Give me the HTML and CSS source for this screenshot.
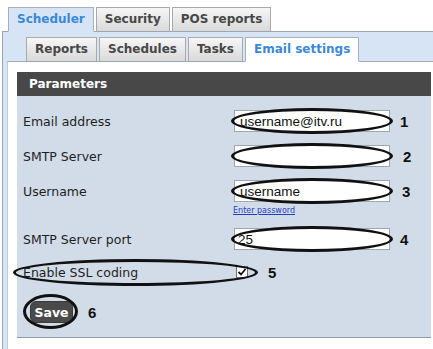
FILE: index.html
```html
<!DOCTYPE html>
<html lang="en">
<head>
  <meta charset="UTF-8">
  <title>Email settings</title>
  <link rel="stylesheet" href="styles.css">
</head>
<body>
<div class="top-tabs">
  <span class="tab tab-active">Scheduler</span>
  <span class="tab">Security</span>
  <span class="tab">POS reports</span>
</div>

<div class="frame">
  <div class="sub-tabs">
    <span class="tab">Reports</span>
    <span class="tab">Schedules</span>
    <span class="tab">Tasks</span>
    <span class="tab tab-current">Email settings</span>
  </div>

  <div class="content">
    <div class="panel">
      <div class="panel-head">Parameters</div>

      <div class="panel-body">
        <div class="field field-first">
          <label class="field-label">Email address</label>
          <span class="marked"><input class="text-input" type="text" value="username@itv.ru"></span>
          <span class="num">1</span>
        </div>

        <div class="field">
          <label class="field-label">SMTP Server</label>
          <span class="marked"><input class="text-input" type="text" value=""></span>
          <span class="num num-wide">2</span>
        </div>

        <div class="field">
          <label class="field-label">Username</label>
          <span class="marked"><input class="text-input" type="text" value="username"></span>
          <span class="num num-mid">3</span>
        </div>
        <div class="link-row"><a href="#" class="small-link">Enter password</a></div>

        <div class="field field-port">
          <label class="field-label">SMTP Server port</label>
          <span class="marked"><input class="text-input text-tight" type="text" value="25"></span>
          <span class="num">4</span>
        </div>

        <div class="field field-check">
          <span class="ssl-wrap">
            <label class="field-label">Enable SSL coding</label>
            <span class="check">
              <svg width="10" height="10" viewBox="0 0 10 10"><path d="M1.5 5 L4 7.5 L8.5 2" fill="none" stroke="#111" stroke-width="1.8"/></svg>
            </span>
          </span>
          <span class="num num-ssl">5</span>
        </div>

        <div class="actions">
          <span class="save-wrap"><button class="btn-save">Save</button></span>
          <span class="num num-save">6</span>
        </div>
      </div>
    </div>
  </div>
</div>
</body>
</html>
```

FILE: styles.css
```css
body {
  margin: 0;
  font-family: 'DejaVu Sans', Verdana, sans-serif;
  color: #1e1e1e;
  background: #ffffff;
}

/* tabs */

.top-tabs,
.sub-tabs {
  display: flex;
  gap: 2px;
  position: relative;
  z-index: 1;
}

.top-tabs {
  padding: 7px 0 0 8px;
}

.sub-tabs {
  padding: 5px 0 0 23px;
}

.tab {
  box-sizing: border-box;
  height: 25px;
  margin-bottom: -1px;
  padding: 0 8px;
  line-height: 22px;
  font-size: 12px;
  font-weight: bold;
  color: #474747;
  background: linear-gradient(#f6f6f6, #d9d9d9);
  border: 1px solid #aaaaaa;
  border-bottom-color: #9aa5b3;
}

.tab-active {
  color: #3b89d6;
  background: #d6e4f6;
  border-color: #a6b1bf;
  border-bottom-color: #d6e4f6;
}

.tab-current {
  color: #3b89d6;
  background: #ffffff;
  border-color: #a6b1bf;
  border-bottom-color: #ffffff;
}

/* frame */

.frame {
  margin-left: 2px;
  background: #d6e4f6;
  border-top: 1px solid #9aa5b3;
  border-left: 1px solid #9aa5b3;
}

.content {
  margin-left: 4px;
  padding: 10px 2px 20px 9px;
  background: #ffffff;
  border-top: 1px solid #a3abb6;
  border-left: 1px solid #c3cad3;
}

.panel {
  background: #d2dce8;
  border-bottom: 1px solid #8e9cad;
}

.panel-head {
  height: 24px;
  padding-left: 12px;
  line-height: 24px;
  font-size: 12px;
  font-weight: bold;
  color: #ffffff;
  background: #484848;
}

.panel-body {
  padding: 0 0 14px 6px;
}

/* fields */

.field {
  display: flex;
  align-items: center;
  height: 22px;
  margin-top: 13px;
}

.field-first {
  margin-top: 14px;
}

.field-port {
  margin-top: 16px;
}

.field-check {
  margin-top: 11px;
}

.field-label {
  width: 211px;
  flex: none;
  font-size: 12.5px;
}

.marked {
  position: relative;
  display: inline-block;
  height: 22px;
}

.marked::after {
  content: '';
  position: absolute;
  top: -2px;
  bottom: -2px;
  left: -3px;
  right: -3px;
  border: 3px solid #111111;
  border-radius: 50%;
  pointer-events: none;
}

.text-input {
  box-sizing: border-box;
  width: 156px;
  height: 22px;
  margin: 0;
  padding: 0 0 0 5px;
  font-family: 'Liberation Sans', Arial, sans-serif;
  font-size: 13.5px;
  color: #111111;
  background: #ffffff;
  border: 1px solid #9ea6b0;
  outline: none;
}

.text-tight {
  padding-left: 3px;
}

.num {
  margin-left: 10px;
  font-family: 'Liberation Sans', Arial, sans-serif;
  font-size: 15px;
  font-weight: bold;
  color: #111111;
}

.num-wide {
  margin-left: 13px;
}

.num-mid {
  margin-left: 12px;
}

.link-row {
  height: 9px;
  margin-top: 1px;
  padding-left: 210px;
  line-height: 9px;
}

.small-link {
  font-size: 8px;
  color: #1f3fbf;
  text-decoration: underline;
}

/* ssl checkbox */

.ssl-wrap {
  position: relative;
  display: flex;
  align-items: center;
  height: 22px;
}

.ssl-wrap::after {
  content: '';
  position: absolute;
  top: -2px;
  bottom: -3px;
  left: -10px;
  right: -10px;
  border: 3px solid #111111;
  border-radius: 50%;
}

.check {
  box-sizing: border-box;
  display: flex;
  align-items: center;
  justify-content: center;
  width: 12px;
  height: 12px;
  margin-left: 2px;
  background: #ffffff;
  border: 1px solid #6f6f6f;
}

.num-ssl {
  margin-left: 20px;
}

/* save */

.actions {
  display: flex;
  align-items: center;
  height: 22px;
  margin-top: 18px;
}

.save-wrap {
  position: relative;
  display: inline-block;
  margin-left: 7px;
  height: 22px;
}

.save-wrap::after {
  content: '';
  position: absolute;
  top: -7px;
  bottom: -6px;
  left: -7px;
  right: -5px;
  border: 3px solid #111111;
  border-radius: 50%;
}

.btn-save {
  box-sizing: border-box;
  width: 43px;
  height: 22px;
  padding: 0;
  font-family: 'DejaVu Sans', Verdana, sans-serif;
  font-size: 12.5px;
  font-weight: bold;
  color: #ffffff;
  background: #4a4a4a;
  border: 1px solid #3a3a3a;
  border-radius: 6px;
}

.num-save {
  margin-left: 15px;
}
```
